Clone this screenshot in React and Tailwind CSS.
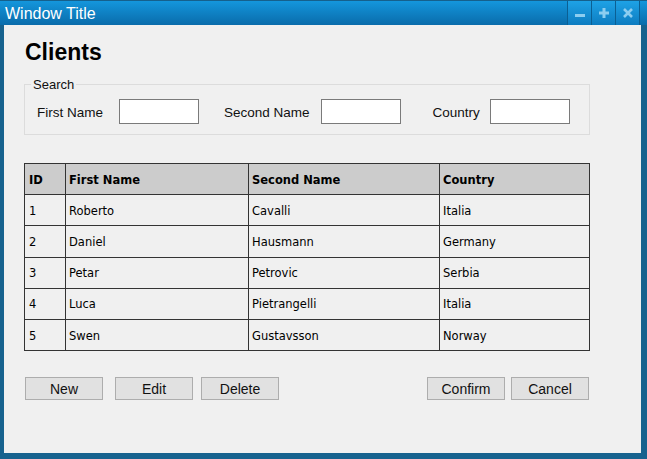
import React from "react";

const rows = [
  ["1", "Roberto", "Cavalli", "Italia"],
  ["2", "Daniel", "Hausmann", "Germany"],
  ["3", "Petar", "Petrovic", "Serbia"],
  ["4", "Luca", "Pietrangelli", "Italia"],
  ["5", "Swen", "Gustavsson", "Norway"],
];

const sans = { fontFamily: '"Liberation Sans", Arial, sans-serif' };
const sketch = { fontFamily: '"Comic Sans MS", "DejaVu Sans", sans-serif' };

function TitleButton({ children }) {
  return (
    <div className="w-[24px] h-[24px] flex items-center justify-center bg-gradient-to-b from-[#1ea2e6] to-[#0d7cc0] border-l border-[#0b5f93]">
      {children}
    </div>
  );
}

function Btn({ label, className = "" }) {
  return (
    <button
      className={"w-[78px] h-[23px] bg-[#e1e1e1] border border-[#adadad] text-[14px] text-[#111] leading-none " + className}
      style={sans}
    >
      {label}
    </button>
  );
}

export default function App() {
  return (
    <div className="w-[647px] h-[459px] flex flex-col bg-[#17628e]" style={sans}>
      <div className="h-[25px] flex items-start bg-gradient-to-b from-[#1496dc] to-[#0a6cab] border-t border-[#15608c]">
        <span className="text-white text-[16px] leading-[26px] pl-[5px] flex-1">Window Title</span>
        <div className="flex mr-[7px] border-r border-[#0b5f93]">
          <TitleButton>
            <svg width="10" height="10" viewBox="0 0 10 10"><rect x="0" y="6" width="10" height="3" fill="#8ccdf0" /></svg>
          </TitleButton>
          <TitleButton>
            <svg width="10" height="10" viewBox="0 0 10 10"><path d="M3.5 0h3v3.5H10v3H6.5V10h-3V6.5H0v-3h3.5z" fill="#8ccdf0" /></svg>
          </TitleButton>
          <TitleButton>
            <svg width="10" height="10" viewBox="0 0 10 10"><path d="M1 1L9 9M9 1L1 9" stroke="#8ccdf0" strokeWidth="2.6" /></svg>
          </TitleButton>
        </div>
      </div>

      <div className="flex-1 ml-[4px] mr-[6px] mb-[6px] bg-[#f0f0f0] flex flex-col pl-[20px]">
        <h1 className="text-[23px] font-bold leading-[28px] mt-[13px] ml-[1px] text-black">Clients</h1>

        <fieldset className="mt-[11px] w-[566px] h-[58px] border border-[#dcdcdc] px-[12px]">
          <legend className="text-[13px] text-[#111] px-[2px] -ml-[6px] leading-[15px]">Search</legend>
          <div className="flex items-center text-[13.5px] text-[#111] mt-[7px]">
            <span className="pt-[4px]">First Name</span>
            <input className="ml-[16px] w-[80px] h-[25px] bg-white border border-[#7a7a7a]" />
            <span className="ml-[25px] pt-[4px]">Second Name</span>
            <input className="ml-[11px] w-[80px] h-[25px] bg-white border border-[#7a7a7a]" />
            <span className="ml-[32px] pt-[4px]">Country</span>
            <input className="ml-[10px] w-[80px] h-[25px] bg-white border border-[#7a7a7a]" />
          </div>
        </fieldset>

        <table className="mt-[28px] w-[566px] border-collapse text-[11.5px] text-black" style={sketch}>
          <thead>
            <tr className="h-[31px] bg-[#cccccc]">
              <th className="w-[41px] text-left font-bold pl-[4px] pt-[3px] border-[1.5px] border-[#333]">ID</th>
              <th className="w-[183px] text-left font-bold pl-[3px] pt-[3px] border-[1.5px] border-[#333]">First Name</th>
              <th className="w-[191px] text-left font-bold pl-[3px] pt-[3px] border-[1.5px] border-[#333]">Second Name</th>
              <th className="text-left font-bold pl-[3px] pt-[3px] border-[1.5px] border-[#333]">Country</th>
            </tr>
          </thead>
          <tbody>
            {rows.map((r) => (
              <tr key={r[0]} className="h-[31.3px]">
                {r.map((c, i) => (
                  <td key={i} className={"border-[1.5px] border-[#333] pt-[2px] " + (i === 0 ? "pl-[4px]" : "pl-[3px]")}>
                    {c}
                  </td>
                ))}
              </tr>
            ))}
          </tbody>
        </table>

        <div className="flex mt-[26px] ml-[1px]">
          <Btn label="New" />
          <Btn label="Edit" className="ml-[12px]" />
          <Btn label="Delete" className="ml-[8px]" />
          <Btn label="Confirm" className="ml-[148px]" />
          <Btn label="Cancel" className="ml-[6px]" />
        </div>
      </div>
    </div>
  );
}
